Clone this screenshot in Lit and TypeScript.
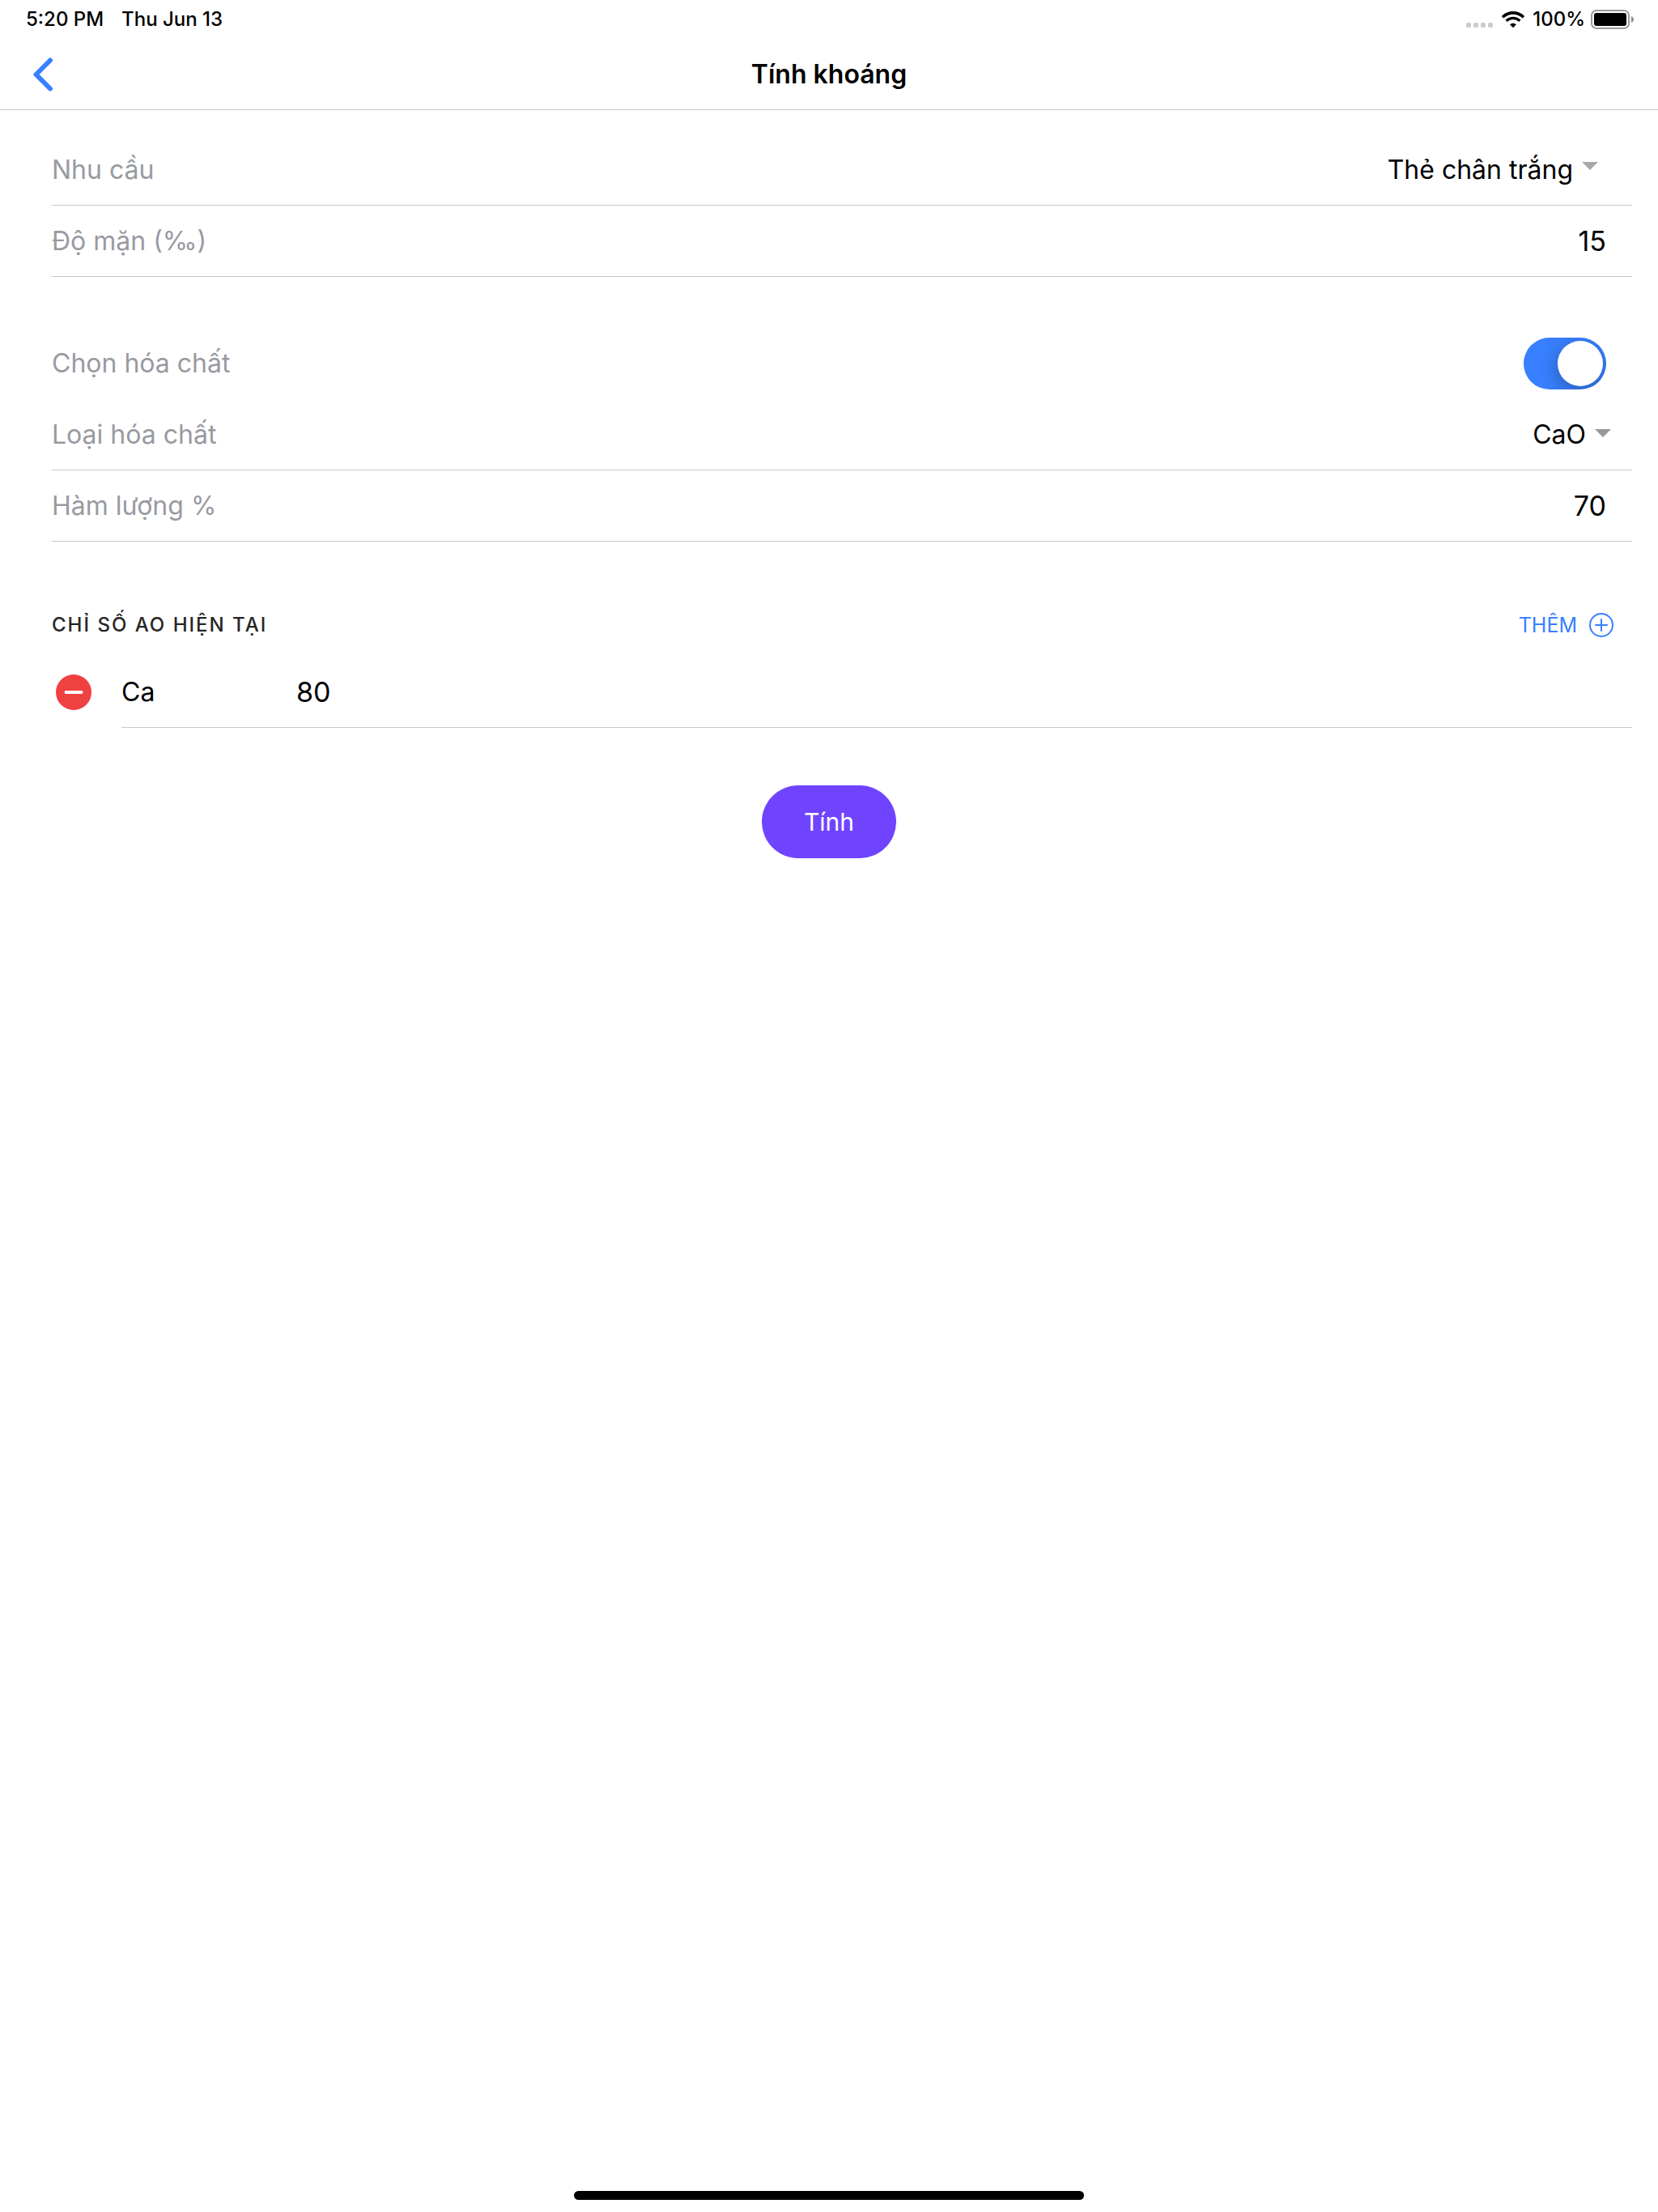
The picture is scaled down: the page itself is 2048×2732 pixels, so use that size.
import { LitElement, html, css } from "lit";
import { customElement, property, state } from "lit/decorators.js";

@customElement("status-bar")
export class StatusBar extends LitElement {
  @property() time = "";
  @property() date = "";

  static styles = css`
    :host {
      display: flex;
      align-items: center;
      justify-content: space-between;
      height: 40px;
      padding: 4px 29px 0 32px;
      font-size: 24px;
      line-height: 40px;
      font-weight: 500;
    }
    .group {
      display: flex;
      align-items: center;
    }
    .left {
      gap: 22px;
    }
    .dots {
      width: 34px;
      height: 22px;
      margin-right: 9px;
    }
    .wifi {
      width: 30px;
      height: 22px;
      margin-right: 9px;
    }
    .battery {
      width: 54px;
      height: 24px;
      margin-left: 7px;
    }
  `;

  render() {
    return html`
      <div class="group left"><span>${this.time}</span><span>${this.date}</span></div>
      <div class="group">
        <svg class="dots" viewBox="0 0 34 22" fill="#cbcbcb" aria-hidden="true">
          <rect x="0" y="15" width="6" height="6" rx="2" />
          <rect x="9" y="15" width="6" height="6" rx="2" />
          <rect x="18" y="15" width="6" height="6" rx="2" />
          <rect x="27" y="15" width="6" height="6" rx="2" />
        </svg>
        <svg class="wifi" viewBox="0 0 30 22" fill="none" stroke="#000" aria-hidden="true">
          <path d="M2 8.2C9.5 1.1 20.500 1.100 28 8.200" stroke-width="3.600" />
          <path d="M6.600 12.700C11.500 8.200 18.500 8.200 23.400 12.700" stroke-width="3.400" />
          <path d="M15 21.200L11 17.200C13.300 15.100 16.700 15.100 19 17.200Z" fill="#000" stroke="none" />
        </svg>
        <span>100%</span>
        <svg class="battery" viewBox="0 0 54 24" aria-hidden="true">
          <rect x="1" y="1" width="46" height="22" rx="6" fill="none" stroke="#9b9b9b" stroke-width="2" />
          <rect x="4" y="4" width="40" height="16" rx="3" fill="#000" />
          <path d="M50 8C54 9.500 54 14.500 50 16Z" fill="#8e8e8e" />
        </svg>
      </div>
    `;
  }
}

@customElement("app-root")
export class AppRoot extends LitElement {
  @state() private useChemical = true;
  @state() private readings = [{ name: "Ca", value: "80" }];

  static styles = css`
    :host {
      display: flex;
      flex-direction: column;
      min-height: 100vh;
      background: #fff;
      color: #000;
      font-family: Inter, "Liberation Sans", sans-serif;
      font-size: 32px;
      line-height: 44px;
    }
    button,
    input,
    select {
      margin: 0;
      padding: 0;
      border: 0;
      background: none;
      font: inherit;
      color: inherit;
      appearance: none;
      cursor: pointer;
    }
    svg {
      display: block;
    }
    .toolbar {
      display: grid;
      grid-template-columns: 1fr auto 1fr;
      align-items: center;
      box-sizing: border-box;
      height: 92px;
      padding: 5px 40px 0;
      border-bottom: 1px solid #c8c8c9;
    }
    .back svg {
      width: 26px;
      height: 42px;
    }
    .title {
      margin: 0;
      font-size: 32px;
      font-weight: 600;
    }
    main {
      flex: 1;
    }
    .form {
      padding: 30px 32px 0 64px;
    }
    .group {
      margin-bottom: 63px;
    }
    .row {
      display: flex;
      align-items: center;
      justify-content: space-between;
      height: 87px;
      padding-right: 32px;
      border-bottom: 1px solid #c8c7cc;
    }
    .row.plain {
      border-bottom-color: transparent;
    }
    .label {
      color: #989aa2;
    }
    .value {
      flex: 1;
      min-width: 0;
      height: 60px;
      font-size: 34px;
      text-align: right;
      cursor: text;
    }
    .picker {
      display: flex;
      align-items: center;
      gap: 11px;
      margin-right: 10px;
    }
    .picker.wide {
      margin-right: -6px;
    }
    .picker select {
      field-sizing: content;
      height: 60px;
    }
    .picker svg {
      width: 20px;
      height: 10px;
      margin-bottom: 10px;
      fill: #a9a9a9;
    }
    .picker.wide svg {
      margin-bottom: 4px;
      fill: #999;
    }
    .toggle {
      display: flex;
      justify-content: flex-end;
      width: 102px;
      height: 64px;
      padding: 4px;
      box-sizing: border-box;
      border-radius: 32px;
      overflow: hidden;
      background: #3880ff;
    }
    .toggle::before {
      content: "";
      width: 56px;
      height: 56px;
      border-radius: 50%;
      background: #fff;
      box-shadow: 0 6px 24px rgba(0, 0, 0, 0.3);
    }
    .toggle:not(:checked) {
      justify-content: flex-start;
      background: #e0e0e2;
    }
    .list-head {
      display: flex;
      align-items: center;
      justify-content: space-between;
      height: 79px;
      padding-right: 22px;
    }
    .list-head h2 {
      margin: 0;
      font-size: 24px;
      font-weight: 500;
      letter-spacing: 2px;
      color: #262626;
    }
    .add {
      display: flex;
      align-items: center;
      gap: 14px;
      font-size: 25px;
      color: #3880ff;
    }
    .add svg {
      width: 32px;
      height: 32px;
    }
    .reading {
      display: flex;
      align-items: center;
    }
    .remove {
      width: 86px;
      padding-left: 5px;
    }
    .remove svg {
      width: 44px;
      height: 44px;
    }
    .reading .row {
      flex: 1;
      justify-content: flex-start;
    }
    .name {
      width: 216px;
    }
    .reading .value {
      text-align: left;
    }
    .actions {
      display: flex;
      justify-content: center;
      padding-top: 71px;
    }
    .submit {
      height: 90px;
      padding: 0 52px;
      border-radius: 45px;
      background: #7044ff;
      color: #fff;
      font-size: 30px;
    }
    .home {
      display: flex;
      justify-content: center;
      padding: 16px 0 15px;
    }
    .home span {
      width: 630px;
      max-width: 60%;
      height: 11px;
      border-radius: 6px;
      background: #000;
    }
  `;

  private removeReading(index: number) {
    this.readings = this.readings.filter((_, i) => i !== index);
  }

  private addReading() {
    this.readings = [...this.readings, { name: "Mg", value: "0" }];
  }

  private caret() {
    return html`<svg viewBox="0 0 20 10" aria-hidden="true"><path d="M0 0H20L10 10Z" /></svg>`;
  }

  render() {
    return html`
      <status-bar time="5:20 PM" date="Thu Jun 13"></status-bar>
      <header class="toolbar">
        <button class="back" type="button">
          <svg viewBox="0 0 26 42" fill="none" stroke="#3880ff" stroke-width="6" stroke-linecap="round" stroke-linejoin="round" aria-hidden="true">
            <path d="M22 3.500L4.500 21L22 38.500" />
          </svg>
        </button>
        <h1 class="title">Tính khoáng</h1>
      </header>
      <main>
        <div class="form">
          <div class="group">
            <div class="row">
              <label class="label" for="need">Nhu cầu</label>
              <div class="picker">
                <select id="need"><option>Thẻ chân trắng</option></select>
                ${this.caret()}
              </div>
            </div>
            <div class="row">
              <label class="label" for="salinity">Độ mặn (‰)</label>
              <input class="value" id="salinity" inputmode="decimal" value="15" />
            </div>
          </div>
          <div class="group">
            <div class="row plain">
              <label class="label" for="chemical">Chọn hóa chất</label>
              <input
                class="toggle"
                id="chemical"
                type="checkbox"
                .checked=${this.useChemical}
                @change=${(e: Event) => (this.useChemical = (e.target as HTMLInputElement).checked)}
              />
            </div>
            <div class="row">
              <label class="label" for="kind">Loại hóa chất</label>
              <div class="picker wide">
                <select id="kind"><option>CaO</option></select>
                ${this.caret()}
              </div>
            </div>
            <div class="row">
              <label class="label" for="content">Hàm lượng %</label>
              <input class="value" id="content" inputmode="decimal" value="70" />
            </div>
          </div>
          <section>
            <div class="list-head">
              <h2>CHỈ SỐ AO HIỆN TẠI</h2>
              <button class="add" type="button" @click=${this.addReading}>
                THÊM
                <svg viewBox="0 0 32 32" fill="none" stroke="#3880ff" stroke-width="2" stroke-linecap="round" aria-hidden="true">
                  <circle cx="16" cy="16" r="14" />
                  <path d="M9 16H23M16 9V23" />
                </svg>
              </button>
            </div>
            ${this.readings.map(
              (r, i) => html`
                <div class="reading">
                  <button class="remove" type="button" @click=${() => this.removeReading(i)}>
                    <svg viewBox="0 0 44 44" aria-hidden="true">
                      <circle cx="22" cy="22" r="22" fill="#f04141" />
                      <path d="M12.500 22H31.500" stroke="#fff" stroke-width="4" stroke-linecap="round" />
                    </svg>
                  </button>
                  <div class="row">
                    <label class="name" for="reading-${i}">${r.name}</label>
                    <input class="value" id="reading-${i}" inputmode="decimal" .value=${r.value} />
                  </div>
                </div>
              `
            )}
          </section>
        </div>
        <div class="actions"><button class="submit" type="button">Tính</button></div>
      </main>
      <div class="home"><span></span></div>
    `;
  }
}
